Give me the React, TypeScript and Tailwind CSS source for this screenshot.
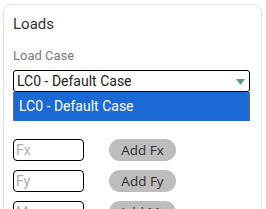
import React from 'react';

const forces = ['Fx', 'Fy', 'Mz'];

const App: React.FC = () => {
  return (
    <main className="w-[266px] h-[209px] overflow-hidden bg-white pt-[4px] pl-[3px] font-['Roboto',sans-serif]">
      <section className="w-[259px] h-[230px] border border-[#e2e2e2] rounded-[8px] px-[9px] pt-[10px]">
        <h2 className="text-[15px] leading-[18px] text-[#333333]">Loads</h2>

        <label className="block mt-[15px] text-[13px] leading-[16px] text-[#7a7a7a]">Load Case</label>

        <div className="relative mt-[6px] w-[237px]">
          <div className="h-[22px] border border-black rounded-[3px] flex items-center pl-[3px] pr-[4px] text-[14px] text-[#222222]">
            <span className="flex-1">LC0 - Default Case</span>
            <svg width="9" height="6" viewBox="0 0 9 6" className="mt-[1px]">
              <path d="M0 0 L9 0 L4.5 6 Z" fill="#5a9e7c" />
            </svg>
          </div>
          {/* open option list */}
          <div className="absolute left-0 top-[22px] w-[237px] h-[29px] bg-[#1b69d4] border-x border-[#6b6b6b] flex items-center pl-[5px] text-[14px] text-white">
            LC0 - Default Case
          </div>
        </div>

        <div className="mt-[47px] flex flex-col gap-[9px]">
          {forces.map((f) => (
            <div key={f} className="flex items-center gap-[25px]">
              <input
                placeholder={f}
                className="w-[71px] h-[22px] border border-black rounded-[4px] px-[2px] text-[14px] placeholder:text-[#b3a9ae] outline-none"
              />
              <button className="w-[67px] h-[22px] rounded-full bg-[#bdbdbd] text-[13.5px] text-[#303030] font-['Open_Sans',sans-serif]">
                Add {f}
              </button>
            </div>
          ))}
        </div>
      </section>
    </main>
  );
};

export default App;
